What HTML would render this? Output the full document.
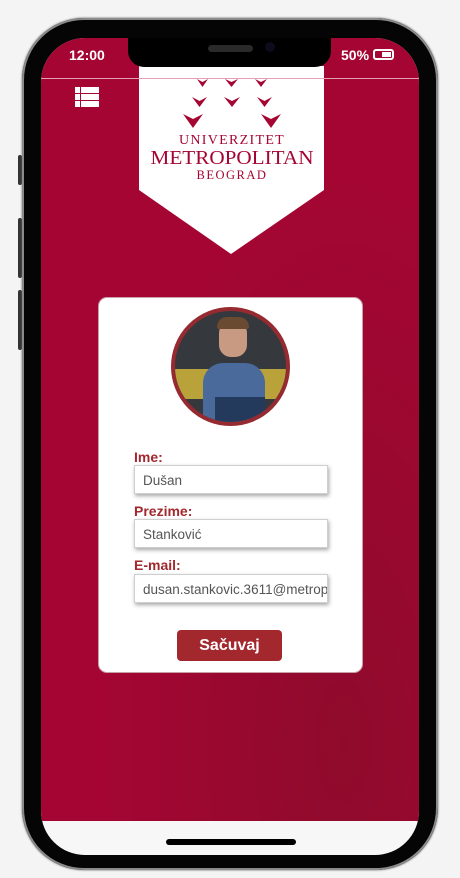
<!DOCTYPE html>
<html><head><meta charset="utf-8"><style>
*{margin:0;padding:0;box-sizing:border-box}
body{width:460px;height:878px;background:#f4f4f4;position:relative;overflow:hidden;font-family:"Liberation Sans",Arial,sans-serif}
.frame{position:absolute;left:22px;top:18px;width:416px;height:852px;background:#050505;border-radius:62px;box-shadow:0 0 0 2px #8a8a8a inset,0 0 2px #666}
.btn{position:absolute;width:4px;background:#333;left:18px;border-radius:2px}
.screen{position:absolute;left:41px;top:38px;width:378px;height:817px;border-radius:44px;overflow:hidden;background:#f7f7f7}
.red{position:absolute;left:0;top:0;width:378px;height:783px;background:radial-gradient(ellipse at 80% 90%,#8f0b2c,transparent 60%),#a50533}
.notch{position:absolute;left:87px;top:0;width:203px;height:29px;background:#000;border-radius:0 0 16px 16px}
.spk{position:absolute;left:80px;top:7px;width:45px;height:7px;background:#2a2a2a;border-radius:4px}
.cam{position:absolute;left:137px;top:4px;width:10px;height:10px;background:#0c0c1c;border-radius:50%}
.sb{position:absolute;top:9px;color:#fff;font-weight:bold;font-size:14px}
.line{position:absolute;left:0;top:40px;width:378px;height:1px;background:#e6a0b5}
.home{position:absolute;left:125px;top:801px;width:130px;height:6px;background:#000;border-radius:3px}
.lbl{position:absolute;left:134px;color:#a3282e;font-weight:bold;font-size:14px}
.in{position:absolute;left:134px;width:194px;height:29px;border:1px solid #cfcfcf;background:#fff;box-shadow:1px 2px 4px rgba(0,0,0,.35);font-size:13.5px;color:#555;padding:7px 0 0 8px;white-space:nowrap;overflow:hidden}
</style></head><body>
<div class="btn" style="top:155px;height:30px"></div>
<div class="btn" style="top:218px;height:60px"></div>
<div class="btn" style="top:290px;height:60px"></div>
<div class="frame"></div>
<div class="screen">
  <div class="red"></div>
  <svg style="position:absolute;left:98px;top:28px" width="186" height="190" viewBox="0 0 186 190">
    <polygon points="0,0 185,0 185,124 92,188 0,124" fill="#fff"/>
    <g fill="#a50533">
      <path d="M58,13 l5.5,8 l5.5,-8 l-5.5,3z"/><path d="M86,13 l6.5,8 l6.5,-8 l-6.5,3z"/><path d="M116,13 l6,8 l6,-8 l-6,3z"/>
      <path d="M53,31 l7.5,10 l7.5,-10 l-7.5,4z"/><path d="M85,31 l8,10 l8,-10 l-8,4z"/><path d="M118,31 l7.5,10 l7.5,-10 l-7.5,4z"/>
      <path d="M44,48 l10,14 l10,-14 l-10,5z"/><path d="M122,48 l10,14 l10,-14 l-10,5z"/>
    </g>
    <text x="93" y="78" text-anchor="middle" font-family="Liberation Serif,serif" font-size="14" letter-spacing="1.3" fill="#a50533">UNIVERZITET</text>
    <text x="93" y="98" text-anchor="middle" font-family="Liberation Serif,serif" font-size="20" fill="#a50533" textLength="163" lengthAdjust="spacingAndGlyphs">METROPOLITAN</text>
    <text x="93" y="113" text-anchor="middle" font-family="Liberation Serif,serif" font-size="12.5" letter-spacing="1.5" fill="#a50533">BEOGRAD</text>
  </svg>
  <div class="line"></div>
  <div class="notch"><div class="spk"></div><div class="cam"></div></div>
  <div class="sb" style="left:28px">12:00</div>
  <div class="sb" style="left:300px">50%</div>
  <div style="position:absolute;left:332px;top:11px;width:21px;height:11px;border:2px solid #fff;border-radius:3px"><div style="position:absolute;right:1px;top:1px;width:9px;height:5px;background:#fff"></div></div>
  <svg style="position:absolute;left:34px;top:49px" width="24" height="21" viewBox="0 0 24 21" fill="#fff">
    <rect x="0" y="0" width="5" height="6"/><rect x="6" y="0" width="18" height="6"/>
    <rect x="0" y="7" width="5" height="6"/><rect x="6" y="7" width="18" height="6"/>
    <rect x="0" y="14" width="5" height="6"/><rect x="6" y="14" width="18" height="6"/>
  </svg>
  <div class="home"></div>
</div>
<div style="position:absolute;left:98px;top:297px;width:265px;height:376px;background:#fff;border-radius:9px;border:1px solid #c8a0a8"></div>
<div style="position:absolute;left:171px;top:307px;width:119px;height:119px;border-radius:50%;border:4px solid #962a31;overflow:hidden;background:#35383c">
  <div style="position:absolute;left:0;top:58px;width:119px;height:30px;background:#b9a23a"></div>
  <div style="position:absolute;left:28px;top:52px;width:62px;height:70px;background:#4a6a9c;border-radius:20px 20px 0 0"></div>
  <div style="position:absolute;left:44px;top:10px;width:28px;height:36px;background:#c89a82;border-radius:12px"></div>
  <div style="position:absolute;left:42px;top:6px;width:32px;height:12px;background:#6b4a32;border-radius:10px 10px 2px 2px"></div>
  <div style="position:absolute;left:40px;top:86px;width:50px;height:30px;background:#233a5c"></div>
</div>
<div class="lbl" style="top:449px">Ime:</div>
<div class="in" style="top:465px">Dušan</div>
<div class="lbl" style="top:503px">Prezime:</div>
<div class="in" style="top:519px">Stanković</div>
<div class="lbl" style="top:557px">E-mail:</div>
<div class="in" style="top:574px">dusan.stankovic.3611@metropolitan.ac.rs</div>
<div style="position:absolute;left:177px;top:630px;width:105px;height:31px;background:#a3282e;border-radius:4px;color:#fff;font-size:16px;font-weight:bold;text-align:center;line-height:31px">Sačuvaj</div>
</body></html>
